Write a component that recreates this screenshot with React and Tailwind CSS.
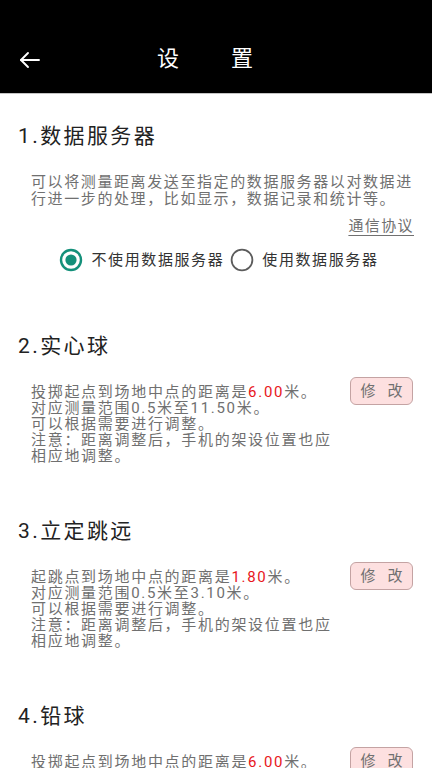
import React from 'react';

const FONT = { fontFamily: 'Roboto, "Noto Sans CJK SC", "Noto Sans", sans-serif' };

const SECTIONS = [
  {
    title: '2.实心球',
    lead: '投掷起点到场地中点的距离是',
    value: '6.00',
    range: '对应测量范围0.5米至11.50米。',
  },
  {
    title: '3.立定跳远',
    lead: '起跳点到场地中点的距离是',
    value: '1.80',
    range: '对应测量范围0.5米至3.10米。',
  },
  {
    title: '4.铅球',
    lead: '投掷起点到场地中点的距离是',
    value: '6.00',
    range: '对应测量范围0.5米至11.50米。',
  },
];

const Radio = ({ checked, label }) => (
  <div className="flex items-center">
    <svg width="24" height="24" viewBox="0 0 24 24">
      {checked ? (
        <>
          <circle cx="12" cy="12" r="10" fill="none" stroke="#14907a" strokeWidth="2.4" />
          <circle cx="12" cy="12" r="5.6" fill="#14907a" />
        </>
      ) : (
        <circle cx="12" cy="12" r="10.4" fill="none" stroke="#5c5c5c" strokeWidth="1.8" />
      )}
    </svg>
    <span className="ml-[8px] text-[15px] leading-[24px] tracking-[1.6px] text-[#333]">{label}</span>
  </div>
);

const SectionTitle = ({ children }) => (
  <div className="pl-[18px] text-[21px] leading-[28px] tracking-[2.4px] text-[#222]">{children}</div>
);

const DistanceSection = ({ title, lead, value, range }) => (
  <div className="mb-[53px]">
    <SectionTitle>{title}</SectionTitle>
    <div className="mt-[17px] flex items-start pl-[31px] pr-[19px]">
      <div className="mt-[7px] flex-1 text-[15px] leading-[16px] tracking-[1.7px] text-[#707070]">
        <div>
          {lead}
          <span className="text-[#e8161c]">{value}</span>米。
        </div>
        <div>{range}</div>
        <div>可以根据需要进行调整。</div>
        <div>注意：距离调整后，手机的架设位置也应</div>
        <div>相应地调整。</div>
      </div>
      <button className="flex h-[28px] w-[63px] shrink-0 items-center justify-center gap-[12px] rounded-[6px] border border-[#c4a3a3] bg-[#fde0e0] text-[15px] text-[#707070]">
        <span>修</span>
        <span>改</span>
      </button>
    </div>
  </div>
);

export default function App() {
  return (
    <div className="h-[768px] w-[432px] overflow-hidden bg-white" style={FONT}>
      <header className="flex h-[94px] items-end border-b-[1.5px] border-[#c4c4c4] bg-black pb-[21px]">
        <svg className="ml-[18px]" width="24" height="24" viewBox="0 0 24 24" fill="none" stroke="#fff" strokeWidth="1.9" strokeLinecap="round" strokeLinejoin="round">
          <path d="M21 12H3" />
          <path d="M10 5l-7 7 7 7" />
        </svg>
        <div className="ml-[115px] flex gap-[52px] text-[22px] leading-[26px] text-white">
          <span>设</span>
          <span>置</span>
        </div>
      </header>

      <div className="pt-[28px]">
        <SectionTitle>1.数据服务器</SectionTitle>
        <div className="mt-[24px] pl-[31px] text-[15px] leading-[17px] tracking-[1.6px] text-[#707070]">
          <div>可以将测量距离发送至指定的数据服务器以对数据进</div>
          <div>行进一步的处理，比如显示，数据记录和统计等。</div>
        </div>
        <div className="mt-[8px] flex justify-end pr-[18px]">
          <span className="text-[15px] leading-[20px] tracking-[1.4px] text-[#707070] underline underline-offset-[4px]">通信协议</span>
        </div>
        <div className="mt-[12px] flex justify-center gap-[6px] pl-[6px]">
          <Radio checked label="不使用数据服务器" />
          <Radio label="使用数据服务器" />
        </div>
      </div>

      <div className="mt-[60px]">
        {SECTIONS.map((s) => (
          <DistanceSection key={s.title} {...s} />
        ))}
      </div>
    </div>
  );
}
